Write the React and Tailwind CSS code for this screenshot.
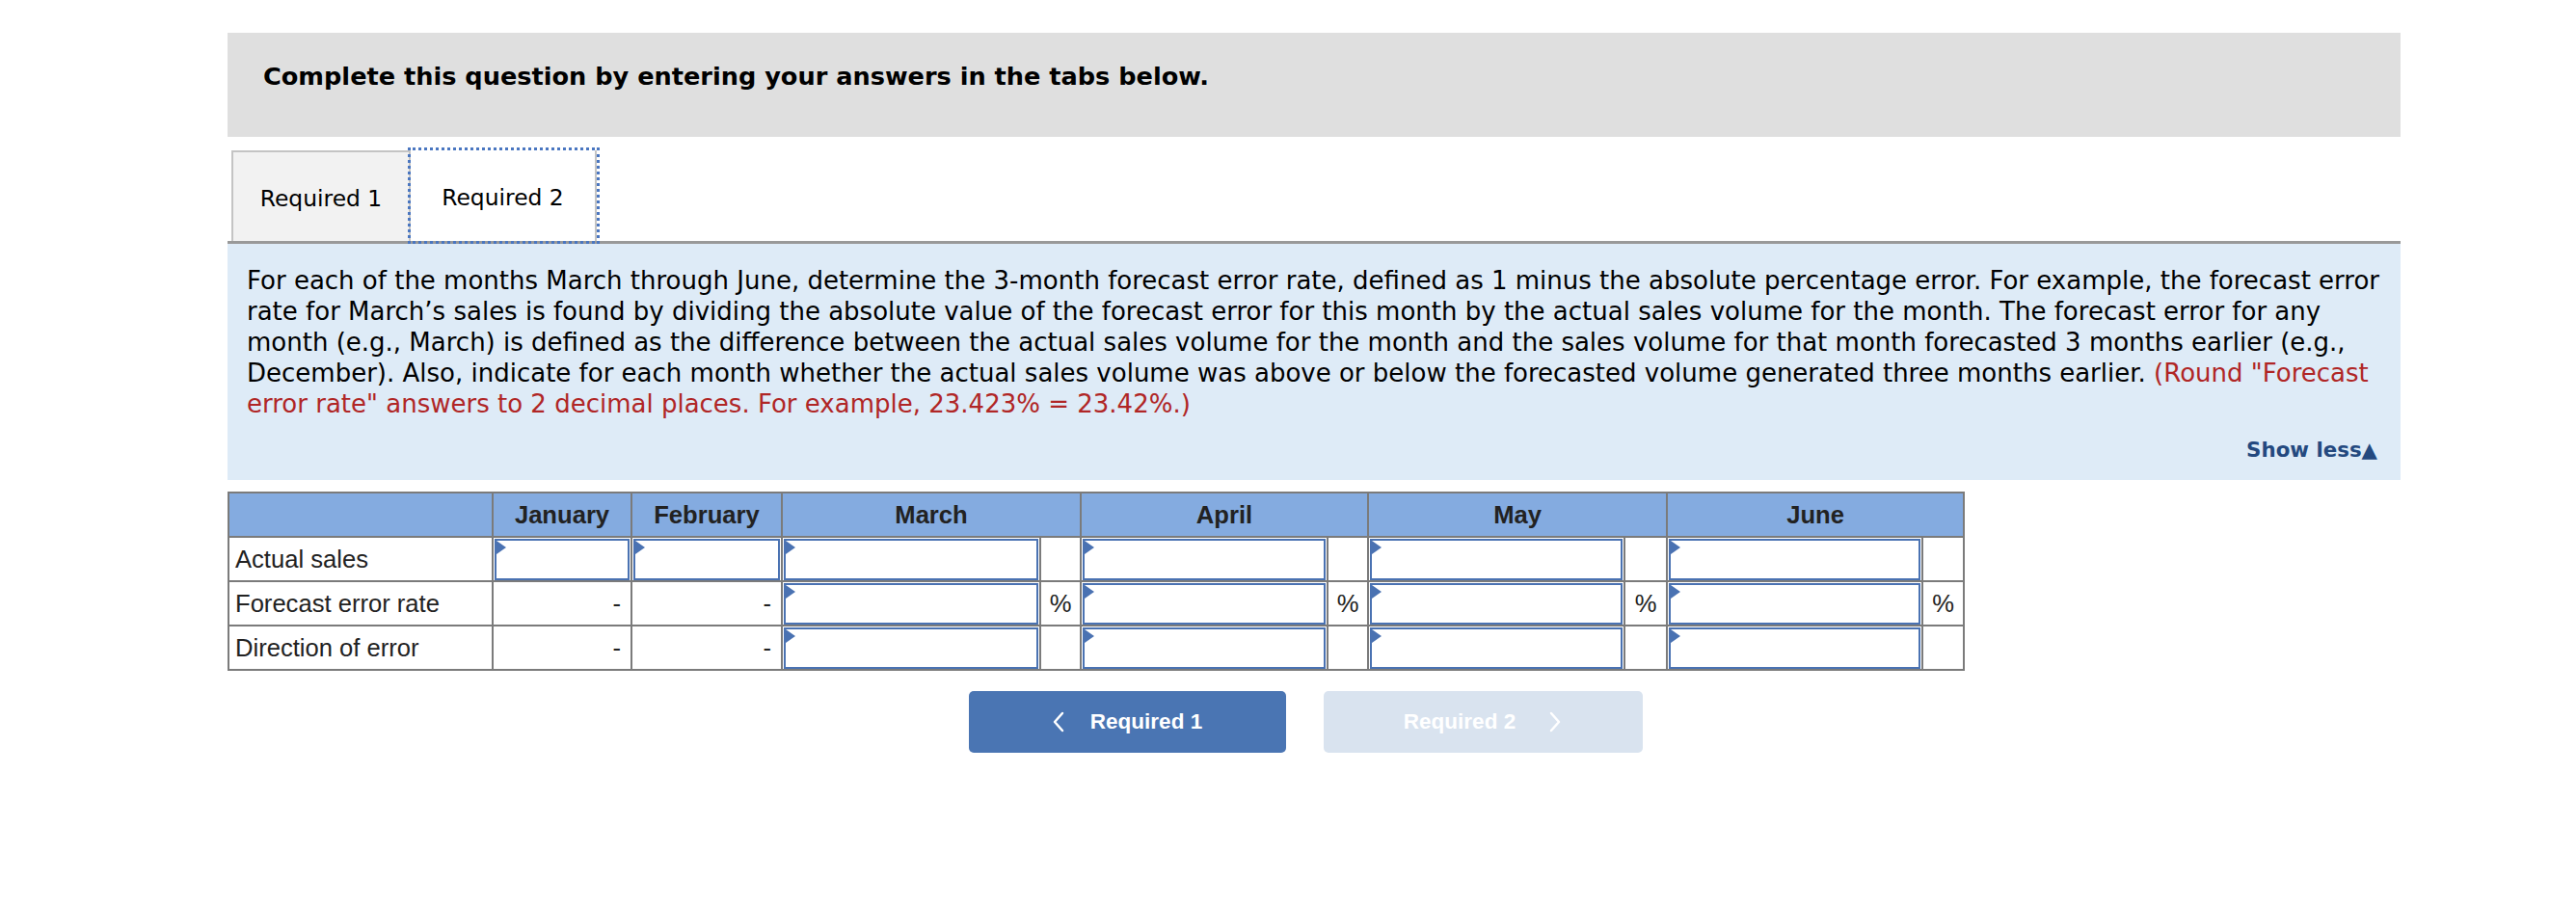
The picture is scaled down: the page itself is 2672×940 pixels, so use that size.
import React from 'react';

const verdana = "font-['DejaVu_Sans',Verdana,sans-serif]";
const arial = "font-['Liberation_Sans',Arial,sans-serif]";

const months = [
  { name: 'March', inW: 'w-[268px]', pctW: 'w-[42px]' },
  { name: 'April', inW: 'w-[256px]', pctW: 'w-[42px]' },
  { name: 'May', inW: 'w-[266px]', pctW: 'w-[44px]' },
  { name: 'June', inW: 'w-[265px]', pctW: 'w-[43px]' },
];

const rows = ['Actual sales', 'Forecast error rate', 'Direction of error'];

const cell = 'border-2 border-[#7b7b7b] h-[46px] p-0';

// answer box with the little blue marker in its corner
const InputBox = () => (
  <div className="relative mx-[1px] h-[43px] border-2 border-[#4a72b2] bg-white">
    <span className="absolute left-0 top-0 h-0 w-0 border-y-[7px] border-y-transparent border-l-[10px] border-l-[#4a72b2]" />
  </div>
);

const Chevron = ({ left }) => (
  <svg width="14" height="22" viewBox="0 0 14 22" fill="none">
    <polyline
      points={left ? '11,2 3,11 11,20' : '3,2 11,11 3,20'}
      stroke="white"
      strokeWidth="2.5"
      strokeLinecap="round"
      strokeLinejoin="round"
    />
  </svg>
);

const App = () => {
  return (
    <div className="min-h-[940px] bg-white">
      <div className="ml-[236px] w-[2254px] pt-[34px]">
        {/* instructions bar */}
        <div className="h-[108px] bg-[#dfdfdf] pl-[37px] pt-[29px]">
          <h2 className={`${verdana} text-[25.6px] font-bold leading-[32px] text-black`}>
            Complete this question by entering your answers in the tabs below.
          </h2>
        </div>

        {/* tabs */}
        <div className="mt-[14px] flex items-end border-b-[3px] border-[#999999] pl-[4px]">
          <div className={`${verdana} flex h-[94px] w-[186px] items-center justify-center border-2 border-b-0 border-[#c4c4c4] bg-[#f2f2f2] pt-[5px] text-[23.4px] text-black`}>
            Required 1
          </div>
          <div className={`${verdana} flex h-[94px] w-[193px] items-center justify-center border-r-2 border-[#c4c4c4] bg-white pt-[5px] text-[23.4px] text-black outline-3 outline-dotted outline-[#4a76c0]`}>
            Required 2
          </div>
        </div>

        {/* question text */}
        <div className="bg-[#deebf7] pb-[15px] pl-[20px] pt-[22px]">
          <p className={`${verdana} whitespace-nowrap text-[26px] leading-[32px] text-black`}>
            For each of the months March through June, determine the 3-month forecast error rate, defined as 1 minus the absolute percentage error. For example, the forecast error
            <br />
            rate for March’s sales is found by dividing the absolute value of the forecast error for this month by the actual sales volume for the month. The forecast error for any
            <br />
            month (e.g., March) is defined as the difference between the actual sales volume for the month and the sales volume for that month forecasted 3 months earlier (e.g.,
            <br />
            December). Also, indicate for each month whether the actual sales volume was above or below the forecasted volume generated three months earlier.{' '}
            <span className="text-[#b02626]">(Round "Forecast</span>
            <br />
            <span className="text-[#b02626]">error rate" answers to 2 decimal places. For example, 23.423% = 23.42%.)</span>
          </p>
          <div className="mt-[16px] flex justify-end pr-[24px]">
            <span className={`${verdana} text-[21.33px] font-bold leading-[32px] text-[#24497f]`}>Show less▲</span>
          </div>
        </div>

        {/* answer table */}
        <table className={`${arial} mt-[12px] w-[1800px] table-fixed border-collapse text-[25.6px] text-[#222222]`}>
          <colgroup>
            <col className="w-[274px]" />
            <col className="w-[144px]" />
            <col className="w-[156px]" />
            {months.map((m) => (
              <React.Fragment key={m.name}>
                <col className={m.inW} />
                <col className={m.pctW} />
              </React.Fragment>
            ))}
          </colgroup>
          <thead>
            <tr className="bg-[#84abe0]">
              <th className={cell} />
              <th className={`${cell} font-bold`}>January</th>
              <th className={`${cell} font-bold`}>February</th>
              {months.map((m) => (
                <th key={m.name} colSpan={2} className={`${cell} font-bold`}>
                  {m.name}
                </th>
              ))}
            </tr>
          </thead>
          <tbody>
            {rows.map((label, i) => (
              <tr key={label}>
                <td className={`${cell} pl-[6px] text-left font-normal`}>{label}</td>
                {[0, 1].map((k) =>
                  i === 0 ? (
                    <td key={k} className={cell}>
                      <InputBox />
                    </td>
                  ) : (
                    <td key={k} className={`${cell} pr-[10px] text-right`}>
                      -
                    </td>
                  )
                )}
                {months.map((m) => (
                  <React.Fragment key={m.name}>
                    <td className={cell}>
                      <InputBox />
                    </td>
                    <td className={`${cell} text-center`}>{i === 1 ? '%' : ''}</td>
                  </React.Fragment>
                ))}
              </tr>
            ))}
          </tbody>
        </table>

        {/* nav buttons */}
        <div className={`${arial} mt-[21px] flex justify-center gap-[39px] pr-[18px]`}>
          <button className="flex h-[64px] w-[329px] items-center justify-center gap-[26px] rounded-[5px] bg-[#4a75b3] text-[22.5px] font-bold text-white">
            <Chevron left />
            <span>Required 1</span>
          </button>
          <button className="flex h-[64px] w-[331px] items-center justify-center gap-[34px] rounded-[5px] bg-[#d9e3ef] text-[22.5px] font-bold text-white">
            <span>Required 2</span>
            <Chevron />
          </button>
        </div>
      </div>
    </div>
  );
};

export default App;
